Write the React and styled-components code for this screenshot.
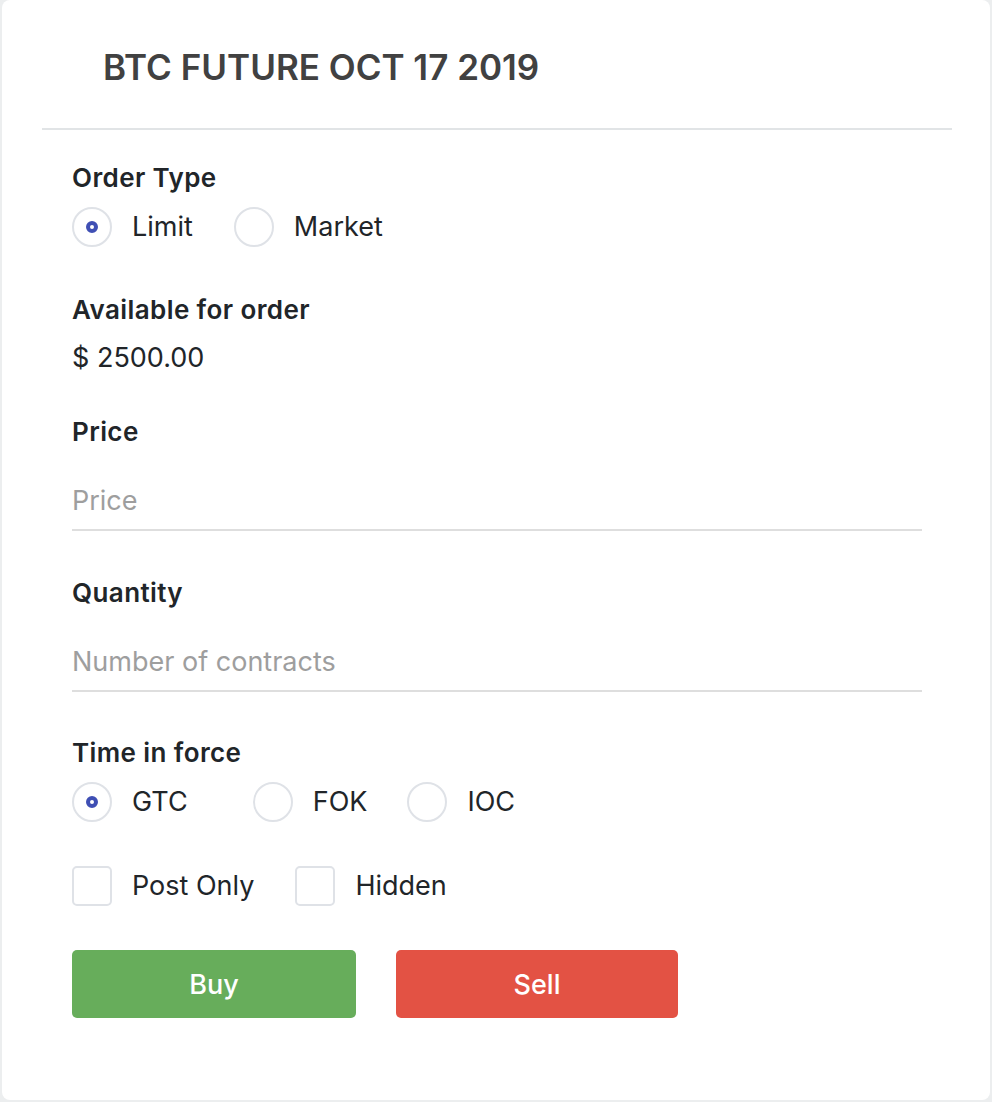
import React from "react";
import styled, { createGlobalStyle } from "styled-components";

const Global = createGlobalStyle`
  html, body { margin: 0; padding: 0; background: #eceeef; }
  body { font-family: Inter, "Noto Sans", "Liberation Sans", sans-serif; -webkit-font-smoothing: antialiased; }
  * { box-sizing: border-box; }
`;

const Page = styled.div`
  padding: 0 2px 2px 2px;
  width: 992px;
  height: 1102px;
`;

const Card = styled.div`
  width: 988px;
  height: 1100px;
  background: #ffffff;
  border-radius: 8px;
  display: flex;
  flex-direction: column;
`;

const Header = styled.div`
  padding: 47px 0 0 101px;
  height: 128px;
`;

const Title = styled.h1`
  margin: 0;
  font-size: 35px;
  line-height: 40px;
  font-weight: 600;
  color: #414141;
  letter-spacing: 0;
`;

const Divider = styled.div`
  height: 2px;
  margin: 0 38px 0 40px;
  background: #e1e4e6;
`;

const Body = styled.div`
  padding: 32px 68px 0 70px;
  display: flex;
  flex-direction: column;
`;

const Label = styled.div`
  font-size: 26px;
  line-height: 32px;
  font-weight: 600;
  letter-spacing: 0.4px;
  color: #212529;
  margin-top: ${(p) => p.$top || 0}px;
`;

const Value = styled.div`
  font-size: 27px;
  line-height: 32px;
  color: #212529;
  margin-top: 16px;
`;

const Row = styled.div`
  display: flex;
  align-items: center;
  height: 40px;
  margin-top: ${(p) => p.$top}px;
`;

const Option = styled.label`
  display: flex;
  align-items: center;
  margin-right: ${(p) => p.$trail}px;
  cursor: pointer;
`;

const OptionText = styled.span`
  font-size: 27px;
  line-height: 40px;
  color: #212529;
  margin-left: 20px;
`;

const RadioCircle = styled.span`
  width: 40px;
  height: 40px;
  border-radius: 50%;
  border: 2px solid #dfe2e7;
  display: flex;
  align-items: center;
  justify-content: center;
  flex-shrink: 0;
`;

const RadioDot = styled.span`
  width: 12px;
  height: 12px;
  border-radius: 50%;
  border: 4px solid #3f4fb4;
  background: #fff;
`;

const CheckBox = styled.span`
  width: 40px;
  height: 40px;
  border-radius: 5px;
  border: 2px solid #dfe2e7;
  flex-shrink: 0;
`;

const Input = styled.input`
  display: block;
  width: 850px;
  margin-top: 32px;
  border: none;
  border-bottom: 2px solid #dedede;
  padding: 0 0 9px 0;
  height: 51px;
  font-family: inherit;
  font-size: 27px;
  line-height: 40px;
  color: #212529;
  outline: none;
  background: transparent;
  &::placeholder { color: #9e9e9e; }
`;

const Buttons = styled.div`
  display: flex;
  gap: 40px;
  margin-top: 44px;
`;

const Button = styled.button`
  width: ${(p) => p.$w}px;
  height: 68px;
  border: none;
  border-radius: 5px;
  background: ${(p) => p.$bg};
  color: #ffffff;
  font-family: inherit;
  font-size: 27px;
  font-weight: 500;
  cursor: pointer;
`;

const Radio = ({ label, checked, trail }) => (
  <Option $trail={trail}>
    <RadioCircle>{checked && <RadioDot />}</RadioCircle>
    <OptionText>{label}</OptionText>
  </Option>
);

const Check = ({ label, trail }) => (
  <Option $trail={trail}>
    <CheckBox />
    <OptionText>{label}</OptionText>
  </Option>
);

export default function App() {
  return (
    <>
      <Global />
      <Page>
        <Card>
          <Header>
            <Title>BTC FUTURE OCT 17 2019</Title>
          </Header>
          <Divider />
          <Body>
            <Label>Order Type</Label>
            <Row $top={13}>
              <Radio label="Limit" checked trail={41} />
              <Radio label="Market" trail={40} />
            </Row>

            <Label $top={47}>Available for order</Label>
            <Value>$ 2500.00</Value>

            <Label $top={42}>Price</Label>
            <Input placeholder="Price" />

            <Label $top={46}>Quantity</Label>
            <Input placeholder="Number of contracts" />

            <Label $top={45}>Time in force</Label>
            <Row $top={13}>
              <Radio label="GTC" checked trail={65} />
              <Radio label="FOK" trail={40} />
              <Radio label="IOC" trail={40} />
            </Row>

            <Row $top={44}>
              <Check label="Post Only" trail={41} />
              <Check label="Hidden" trail={40} />
            </Row>

            <Buttons>
              <Button $bg="#67ad5b" $w={284}>Buy</Button>
              <Button $bg="#e35244" $w={282}>Sell</Button>
            </Buttons>
          </Body>
        </Card>
      </Page>
    </>
  );
}
